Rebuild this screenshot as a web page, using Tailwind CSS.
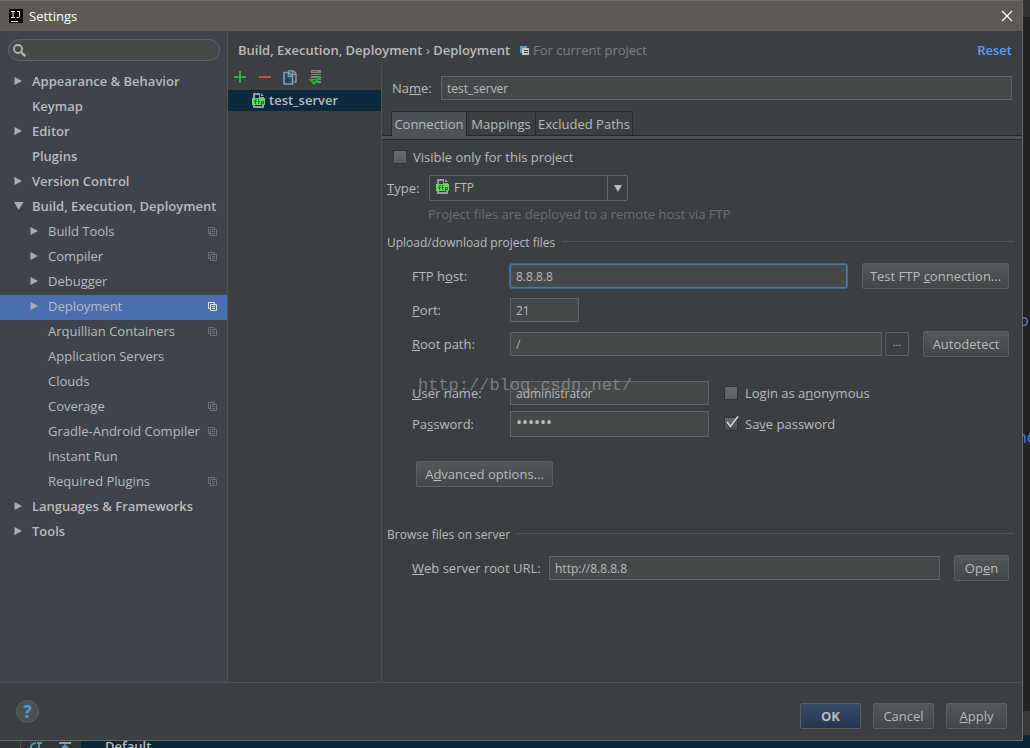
<!DOCTYPE html>
<html lang="en">
<head>
    <meta charset="UTF-8">
    <title>Settings</title>
    <script src="https://cdn.jsdelivr.net/npm/@tailwindcss/browser@4"></script>
</head>
<body class="min-h-screen flex flex-col bg-[#232323] text-[#bbbbbb] text-[13px] leading-5 font-['Open_Sans','Noto_Sans',sans-serif]">
    <!-- shared icons -->
    <svg class="hidden">
        <symbol id="i-right" viewBox="0 0 9 10"><path d="M.5 1l7.500 4L.5 9z" fill="#adadad"/></symbol>
        <symbol id="i-down" viewBox="0 0 10 8"><path d="M0 0h9.500l-4.700 8z" fill="#adadad"/></symbol>
        <symbol id="i-proj" viewBox="0 0 9 9"><path d="M2.500 6.500h-2v-6h6v2M2.500 2.500h6v6h-6zM4 4.500h3M4 6.500h3" fill="none" stroke="currentColor"/></symbol>
        <symbol id="i-ftp" viewBox="0 0 14 15">
            <path d="M1 0h7v4h4v1H10V5H7V2H3v3H1zM1 12h2v1h7v-1h2v3H1z" fill="#9a9da0"/><path d="M9 0l3 3H9z" fill="#9a9da0"/>
            <path d="M0 5h13v7H0z" fill="#62d957"/>
            <path d="M3.500 11V6.500H5M2 8.500h2.500M6.500 6v4.500h1M5.500 8.500h2.500M9.500 12V8.500h2v2h-2" fill="none" stroke="#2c6b27"/>
        </symbol>
    </svg>

    <div class="flex-1 flex">
        <div class="flex-1 min-w-0 flex flex-col bg-[#3c3f41] border-t border-r border-b border-[#6e6a66]">
            <header class="h-[30px] shrink-0 flex items-center bg-[#5e5955] pl-[9px] pr-2 text-white">
                <svg class="w-[14px] h-[14px]" viewBox="0 0 14 14"><path d="M0 0h14v14H0z" fill="#000"/><path d="M2 2.500h4M4 2.500v6M2 8.500h4M8 2.500h2.500v4.500c0 1-.5 1.500-1.500 1.500H7.500M2 12.500h7" fill="none" stroke="#fff"/></svg>
                <h1 class="ml-[6px] flex-1">Settings</h1>
                <button type="button" aria-label="Close" class="p-[1px]"><svg class="w-[12px] h-[12px]" viewBox="0 0 12 12"><path d="M1 1l10 10M11 1L1 11" stroke="#fff" stroke-width="1.200"/></svg></button>
            </header>

            <div class="flex-1 flex">
                <nav class="w-[228px] shrink-0 bg-[#3e434c] border-r border-[#515151] pt-2">
                    <div class="relative mx-2 mb-[9px] mr-[7px]">
                        <svg class="absolute left-[5px] top-[5px] w-[13px] h-[13px]" viewBox="0 0 13 13"><circle cx="5" cy="5" r="4" fill="none" stroke="#afb1b3" stroke-width="1.800"/><path d="M8 8l4.200 4.200" stroke="#afb1b3" stroke-width="2.400"/></svg>
                        <input type="search" aria-label="Search settings" class="block w-full h-[22px] rounded-full border border-[#646464] bg-[#45494a] pl-6 outline-none">
                    </div>
                    <ul>
                        <li class="h-[25px] flex items-center pb-[3px] pl-[14px] font-semibold"><svg class="w-[9px] h-[10px] mr-[9px]"><use href="#i-right"/></svg>Appearance &amp; Behavior</li>
                        <li class="h-[25px] flex items-center pb-[3px] pl-8 font-semibold">Keymap</li>
                        <li class="h-[25px] flex items-center pb-[3px] pl-[14px] font-semibold"><svg class="w-[9px] h-[10px] mr-[9px]"><use href="#i-right"/></svg>Editor</li>
                        <li class="h-[25px] flex items-center pb-[3px] pl-8 font-semibold">Plugins</li>
                        <li class="h-[25px] flex items-center pb-[3px] pl-[14px] font-semibold"><svg class="w-[9px] h-[10px] mr-[9px]"><use href="#i-right"/></svg>Version Control</li>
                        <li class="h-[25px] flex items-center pb-[3px] pl-[14px] font-semibold"><svg class="w-[10px] h-[8px] mr-2"><use href="#i-down"/></svg>Build, Execution, Deployment</li>
                        <li class="h-[25px] flex items-center pb-[3px] pl-[30px] pr-[10px]"><svg class="w-[9px] h-[10px] mr-[9px]"><use href="#i-right"/></svg>Build Tools<svg class="w-[9px] h-[9px] ml-auto text-[#6f7275]"><use href="#i-proj"/></svg></li>
                        <li class="h-[25px] flex items-center pb-[3px] pl-[30px] pr-[10px]"><svg class="w-[9px] h-[10px] mr-[9px]"><use href="#i-right"/></svg>Compiler<svg class="w-[9px] h-[9px] ml-auto text-[#6f7275]"><use href="#i-proj"/></svg></li>
                        <li class="h-[25px] flex items-center pb-[3px] pl-[30px]"><svg class="w-[9px] h-[10px] mr-[9px]"><use href="#i-right"/></svg>Debugger</li>
                        <li class="h-[25px] flex items-center pb-[3px] pl-[30px] pr-[10px] bg-[#4b6eaf]"><svg class="w-[9px] h-[10px] mr-[9px]"><use href="#i-right"/></svg>Deployment<svg class="w-[9px] h-[9px] ml-auto text-[#dfe3dc]"><use href="#i-proj"/></svg></li>
                        <li class="h-[25px] flex items-center pb-[3px] pl-12 pr-[10px]">Arquillian Containers<svg class="w-[9px] h-[9px] ml-auto text-[#6f7275]"><use href="#i-proj"/></svg></li>
                        <li class="h-[25px] flex items-center pb-[3px] pl-12">Application Servers</li>
                        <li class="h-[25px] flex items-center pb-[3px] pl-12">Clouds</li>
                        <li class="h-[25px] flex items-center pb-[3px] pl-12 pr-[10px]">Coverage<svg class="w-[9px] h-[9px] ml-auto text-[#6f7275]"><use href="#i-proj"/></svg></li>
                        <li class="h-[25px] flex items-center pb-[3px] pl-12 pr-[10px]">Gradle-Android Compiler<svg class="w-[9px] h-[9px] ml-auto text-[#6f7275]"><use href="#i-proj"/></svg></li>
                        <li class="h-[25px] flex items-center pb-[3px] pl-12">Instant Run</li>
                        <li class="h-[25px] flex items-center pb-[3px] pl-12 pr-[10px]">Required Plugins<svg class="w-[9px] h-[9px] ml-auto text-[#6f7275]"><use href="#i-proj"/></svg></li>
                        <li class="h-[25px] flex items-center pb-[3px] pl-[14px] font-semibold"><svg class="w-[9px] h-[10px] mr-[9px]"><use href="#i-right"/></svg>Languages &amp; Frameworks</li>
                        <li class="h-[25px] flex items-center pb-[3px] pl-[14px] font-semibold"><svg class="w-[9px] h-[10px] mr-[9px]"><use href="#i-right"/></svg>Tools</li>
                    </ul>
                </nav>

                <main class="flex-1 min-w-0 flex flex-col">
                    <div class="h-[34px] pb-[5px] pt-[9px] pl-[10px] pr-[10px] flex">
                        <h2 class="font-semibold">Build, Execution, Deployment <span class="font-normal">›</span> Deployment</h2>
                        <p class="ml-[10px] flex items-center text-[#808080]"><svg class="w-[9px] h-[9px] mr-1" viewBox="0 0 9 9"><path d="M0 0h7v2H2v5H0z" fill="#5a9cbc"/><path d="M2 2h7v7H2z" fill="#c4c4c4"/><path d="M4 4.500h4M4 6.500h4" stroke="#45494a"/></svg>For current project</p>
                        <a href="#" class="ml-auto font-semibold text-[#589df6]">Reset</a>
                    </div>
                    <div class="flex-1 flex">
                        <section class="w-[154px] shrink-0 border-r border-[#515151]">
                            <div class="h-[25px] flex items-center pl-[6px] pb-px gap-3">
                                <button type="button" aria-label="Add"><svg class="w-[12px] h-[12px]" viewBox="0 0 12 12"><path d="M6 0v12M0 6h12" stroke="#36b04c" stroke-width="2"/></svg></button>
                                <button type="button" aria-label="Remove"><svg class="w-[13px] h-[12px]" viewBox="0 0 13 12"><path d="M1 6h12" stroke="#c9503f" stroke-width="2"/></svg></button>
                                <button type="button" aria-label="Copy"><svg class="w-[14px] h-[15px]" viewBox="0 0 14 15"><path d="M5 1h5.500L13 3.500V12h-2M9.500 1v3.500H13" fill="none" stroke="#8f9294" stroke-width="1.500"/><path d="M1 2.500h5l3.500 3.500v8H1zM5.500 3v3.500H9" fill="none" stroke="#6ba3c5" stroke-width="1.600"/></svg></button>
                                <button type="button" aria-label="Use as default"><svg class="w-[13px] h-[15px]" viewBox="0 0 13 15"><path d="M2 0h10v3H2zM2 4h10v1H2zM2 6h10v2H2zM2 9h10v1H2zM5 11h7v2H5z" fill="#85888a"/><path d="M3.500 1.500h1M5.500 1.500h1M7.500 1.500h1" stroke="#3c3f41"/><path d="M1 9l4 4.500L12 6.500" fill="none" stroke="#21b021" stroke-width="2.400"/></svg></button>
                            </div>
                            <div class="h-[21px] flex items-center pb-px pl-6 bg-[#0d293e] font-semibold"><svg class="w-[14px] h-[15px] mr-[3px]"><use href="#i-ftp"/></svg>test_server</div>
                        </section>

                        <section class="flex-1 min-w-0">
                            <div class="flex items-center pt-[11px] pl-[10px] pr-[10px] pb-[11px]">
                                <label for="name" class="w-[49px] shrink-0">Na<u>m</u>e:</label>
                                <input id="name" type="text" value="test_server" class="flex-1 min-w-0 h-6 border border-[#646464] bg-[#45494a] px-[5px] text-xs outline-none">
                            </div>

                            <div role="tablist" class="flex pl-[9px] border-b border-[#282828]">
                                <button type="button" role="tab" aria-selected="true" class="h-[25px] w-[76px] -mb-px border border-b-0 border-[#282828] bg-[#4e5254]">Connection</button>
                                <button type="button" role="tab" class="h-6 w-[69px] border border-l-0 border-b-0 border-[#282828]">Mappings</button>
                                <button type="button" role="tab" class="h-6 w-[97px] border border-l-0 border-b-0 border-[#282828]">Excluded Paths</button>
                            </div>
                            <div class="h-1 bg-[#4e5254] border-b border-[#282828]"></div>

                            <div class="pl-[5px] pt-[7px]">
                                <div class="flex items-center pl-[6px]">
                                    <input id="visible" type="checkbox" class="appearance-none size-[14px] border border-[#323436] bg-linear-to-b from-[#6b6b6b] to-[#5d5d5d]">
                                    <label for="visible" class="ml-[6px]">Visible only for this project</label>
                                </div>
                                <div class="flex items-center mt-2">
                                    <label for="type" class="w-[42px]"><u>T</u>ype:</label>
                                    <div class="relative w-[199px]">
                                        <select id="type" class="block appearance-none w-full h-[26px] rounded-xs border border-[#646464] bg-[#3c3f41] pl-6 text-xs outline-none"><option>FTP</option></select>
                                        <svg class="absolute left-[7px] top-1 w-[14px] h-[15px] pointer-events-none"><use href="#i-ftp"/></svg>
                                        <span class="absolute right-0 inset-y-0 w-[21px] border-l border-[#646464] flex items-center justify-center pointer-events-none"><svg class="w-[8px] h-[7px]" viewBox="0 0 8 7"><path d="M0 0h8L4 7z" fill="#bbb"/></svg></span>
                                    </div>
                                </div>
                                <p class="pl-[41px] mt-[3px] mb-px text-[#6e6e6e]">Project files are deployed to a remote host via FTP</p>
                            </div>

                            <div class="relative pl-[5px] pt-2">
                                <div class="flex items-center gap-[7px] pr-2">
                                    <h3 class="text-xs leading-5">Upload/download project files</h3><span class="flex-1 mb-1 border-t border-[#555555]"></span>
                                </div>
                                <div class="pl-[25px] pr-[13px] pt-[10px] flex flex-col">
                                    <div class="h-[26px] flex items-center">
                                        <label for="host" class="w-[98px] shrink-0">FTP h<u>o</u>st:</label>
                                        <input id="host" type="text" value="8.8.8.8" class="flex-1 min-w-0 h-6 border border-[#4a78a8] ring-1 ring-[#46688c] rounded-xs bg-[#45494a] px-[5px] text-xs outline-none">
                                        <button type="button" class="ml-[15px] w-[147px] h-[26px] rounded-xs border border-[#5e6060] bg-linear-to-b from-[#525759] to-[#424748]">Test FTP <u>c</u>onnection...</button>
                                    </div>
                                    <div class="mt-2 h-[26px] flex items-center">
                                        <label for="port" class="w-[98px] shrink-0"><u>P</u>ort:</label>
                                        <input id="port" type="text" value="21" class="w-[69px] h-6 border border-[#646464] bg-[#45494a] px-[5px] text-xs outline-none">
                                    </div>
                                    <div class="mt-2 h-[26px] flex items-center">
                                        <label for="root" class="w-[98px] shrink-0"><u>R</u>oot path:</label>
                                        <input id="root" type="text" value="/" class="flex-1 min-w-0 h-6 border border-[#646464] bg-[#45494a] px-[5px] text-xs outline-none">
                                        <button type="button" class="ml-[3px] w-6 h-6 rounded-xs border border-[#5e6060] pb-1 text-[10px] leading-4">...</button>
                                        <button type="button" class="ml-[14px] w-[86px] h-[26px] rounded-xs border border-[#5e6060] bg-linear-to-b from-[#525759] to-[#424748]">Autodetect</button>
                                    </div>
                                    <div class="mt-[23px] h-[26px] flex items-center">
                                        <label for="user" class="w-[98px] shrink-0"><u>U</u>ser name:</label>
                                        <input id="user" type="text" value="administrator" class="w-[199px] h-6 border border-[#646464] bg-[#45494a] px-[5px] text-xs outline-none">
                                        <input id="anon" type="checkbox" class="ml-[15px] appearance-none size-[14px] border border-[#323436] bg-linear-to-b from-[#6b6b6b] to-[#5d5d5d]">
                                        <label for="anon" class="ml-[7px]">Login as a<u>n</u>onymous</label>
                                    </div>
                                    <div class="mt-[5px] h-[26px] flex items-center">
                                        <label for="pass" class="w-[98px] shrink-0">Pa<u>s</u>sword:</label>
                                        <input id="pass" type="password" value="secret" class="w-[199px] h-[26px] border border-[#646464] bg-[#45494a] px-[5px] pb-1 text-base outline-none">
                                        <span class="relative ml-[15px] flex">
                                            <input id="save" type="checkbox" checked class="appearance-none size-[14px] border border-[#323436] bg-linear-to-b from-[#6b6b6b] to-[#4d4d4d]">
                                            <svg class="absolute left-0 -top-[2px] w-[15px] h-[15px] pointer-events-none" viewBox="0 0 15 15"><path d="M3 8l3.500 5L14 3" fill="none" stroke="#2a2a2a" stroke-width="2"/><path d="M3 7l3.500 4.500L14 1.500" fill="none" stroke="#c8c8c8" stroke-width="2"/></svg>
                                        </span>
                                        <label for="save" class="ml-[7px]">Sa<u>v</u>e password</label>
                                    </div>
                                    <button type="button" class="mt-6 ml-1 w-[137px] h-[26px] rounded-xs border border-[#5e6060] bg-linear-to-b from-[#525759] to-[#424748]">A<u>d</u>vanced options...</button>
                                </div>
                                <span class="absolute left-9 top-[149px] text-[17px] leading-6 text-[#9a9a9a]/70 font-['Liberation_Mono',monospace] pointer-events-none">http://blog.csdn.net/</span>
                            </div>

                            <div class="pl-[5px] pt-[38px]">
                                <div class="flex items-center gap-[6px] pr-2">
                                    <h3 class="text-xs leading-5">Browse files on server</h3><span class="flex-1 mb-1 border-t border-[#555555]"></span>
                                </div>
                                <div class="pl-[25px] pr-[13px] mt-[10px] h-[26px] flex items-center">
                                    <label for="url" class="w-[137px] shrink-0"><u>W</u>eb server root URL:</label>
                                    <input id="url" type="text" value="http://8.8.8.8" class="flex-1 min-w-0 h-6 border border-[#646464] bg-[#45494a] px-[5px] text-xs outline-none">
                                    <button type="button" class="ml-[14px] w-[55px] h-[26px] rounded-xs border border-[#5e6060] bg-linear-to-b from-[#525759] to-[#424748]">Op<u>e</u>n</button>
                                </div>
                            </div>
                        </section>
                    </div>
                </main>
            </div>

            <footer class="h-[58px] shrink-0 flex items-center gap-3 border-t border-[#515151] pl-4 pr-[15px] pt-[9px]">
                <button type="button" aria-label="Help" class="mr-auto -mt-[10px] size-[23px] rounded-full border border-[#5e6060] bg-[#4b5052] text-[#4a9fd0] text-lg leading-5 font-bold">?</button>
                <button type="button" class="w-[61px] h-[26px] rounded-xs border border-[#5b5e62] bg-linear-to-b from-[#374a6b] to-[#26344d] font-bold">OK</button>
                <button type="button" class="w-[61px] h-[26px] rounded-xs border border-[#5e6060] bg-linear-to-b from-[#525759] to-[#424748]">Cancel</button>
                <button type="button" class="w-[61px] h-[26px] rounded-xs border border-[#5e6060] bg-linear-to-b from-[#525759] to-[#424748]"><u>A</u>pply</button>
            </footer>
        </div>

        <!-- editor window showing behind the dialog -->
        <aside class="w-[7px] shrink-0 flex flex-col overflow-hidden text-[#4a7fe0] text-base">
            <div class="h-[17px] bg-[#313335]"></div>
            <div class="h-[291px]"></div>
            <div class="-ml-1">o</div>
            <div class="h-[93px]"></div>
            <div class="-ml-[6px]">ne</div>
            <div class="mt-auto h-6 bg-[#37393b]"></div>
            <div class="h-[6px] bg-[#0b2436]"></div>
        </aside>
    </div>
    <div class="h-[7px] flex overflow-hidden bg-[#0b2436]">
        <div class="w-[21px] bg-[#323537] border-r border-[#505050]"></div>
        <div class="w-[60px] bg-[#323537] flex gap-4 pl-2 pt-[1px]">
            <svg class="w-[14px] h-[6px]" viewBox="0 0 14 6"><path d="M2 6c0-3 2-5 5-5M8 1h5M10 1v5" fill="none" stroke="#5d93b5" stroke-width="2"/></svg>
            <svg class="w-[12px] h-[6px]" viewBox="0 0 12 6"><path d="M0 1h12" stroke="#9a9a9a" stroke-width="2"/><path d="M2 6l4-4 4 4z" fill="#5d93b5"/></svg>
        </div>
        <span class="ml-6 -mt-[5px] font-semibold">Default</span>
    </div>
</body>
</html>
